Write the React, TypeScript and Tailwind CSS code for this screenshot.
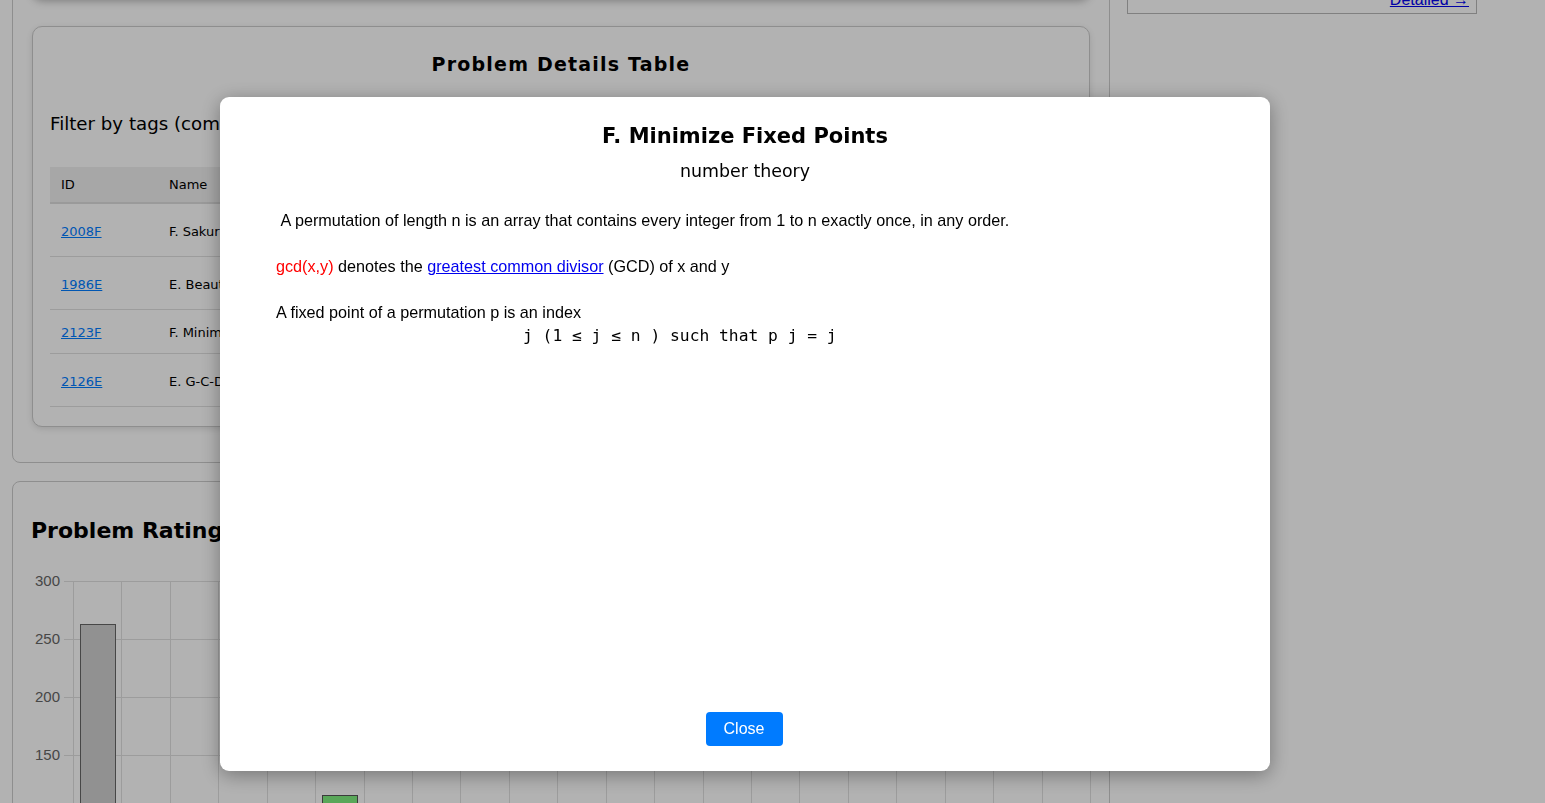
import React from "react";

const rows = [
  { id: "2008F", name: "F. Sakurako's Box", rating: "1400", tags: "combinatorics, math, number theory", h: "h-[53px]" },
  { id: "1986E", name: "E. Beautiful Array", rating: "1700", tags: "greedy, math, number theory, sortings", h: "h-[53px]" },
  { id: "2123F", name: "F. Minimize Fixed Points", rating: "1700", tags: "number theory", h: "h-[44px]" },
  { id: "2126E", name: "E. G-C-D, Unlucky!", rating: "1400", tags: "math, number theory", h: "h-[53px]" },
];

function Chart() {
  const gridX = Array.from({ length: 22 }, (_, k) => Math.round(60 + 48.43 * k) + 0.5);
  const gridY = [
    { v: 300, y: 36.5 },
    { v: 250, y: 94.5 },
    { v: 200, y: 152.5 },
    { v: 150, y: 210.5 },
    { v: 100, y: 268.5 },
  ];
  return (
    <svg width="1096" height="300" className="block" style={{ fontFamily: "'Liberation Sans', Arial, sans-serif" }}>
      {gridY.map((g) => (
        <g key={g.v}>
          <line x1={51} x2={1077} y1={g.y} y2={g.y} stroke="#e0e0e0" strokeWidth={1} />
          <text x={47} y={g.y + 4.5} textAnchor="end" fontSize={15} fill="#666">
            {g.v}
          </text>
        </g>
      ))}
      {gridX.map((x, i) => (
        <line key={i} x1={x} x2={x} y1={36} y2={300} stroke="#e0e0e0" strokeWidth={1} />
      ))}
      <rect x={67.5} y={79.5} width={35} height={240} fill="#d0d0d0" stroke="#666" strokeWidth={1} />
      <rect x={309.5} y={250.5} width={35} height={80} fill="#80f080" stroke="#555" strokeWidth={1} />
    </svg>
  );
}

export default function App() {
  return (
    <div className="relative h-[803px] overflow-hidden bg-white text-black font-['DejaVu_Sans',Verdana,sans-serif]">
      <div className="flex items-start pl-3 gap-[17px] -mt-[200px]">
        {/* left column */}
        <div className="w-[1098px] flex flex-col gap-[18px]">
          <section className="border border-[#cccccc] rounded-[8px] px-[19px] pt-[20px] pb-[35px]">
            <div className="h-[178px] mb-[27px] rounded-[10px] bg-white shadow-[0_2px_8px_rgba(0,0,0,0.3)]" />
            <div className="rounded-[10px] border border-[#cccccc] bg-white shadow-[0_2px_6px_rgba(0,0,0,0.12)] px-[17px] pt-[23px] pb-[19px]">
              <h2 className="text-center text-[19px] leading-[28px] font-bold tracking-[1.2px]">Problem Details Table</h2>
              <div className="mt-[34px] h-[24px] flex items-center gap-3">
                <label className="text-[18.2px] leading-[24px]">Filter by tags (comma separated):</label>
                <input className="w-[300px] h-[24px] border border-[#ccc] rounded px-2 text-[14px]" placeholder="e.g. math, greedy" />
              </div>
              <div className="mt-[31px] text-[13px]">
                <div className="flex items-center pt-[1px] h-[37px] bg-[#f0f0f0] border-b-2 border-[#dddddd]">
                  <div className="w-[108px] pl-[11px]">ID</div>
                  <div className="w-[400px] pl-[11px]">Name</div>
                  <div className="w-[120px] pl-[11px]">Rating</div>
                  <div className="flex-1 pl-[11px]">Tags</div>
                </div>
                {rows.map((r) => (
                  <div key={r.id} className={`flex items-center pt-[3px] ${r.h} border-b border-[#e0e0e0]`}>
                    <div className="w-[108px] pl-[11px]">
                      <a href="#" className="text-[#007bff] underline">{r.id}</a>
                    </div>
                    <div className="w-[400px] pl-[11px]">{r.name}</div>
                    <div className="w-[120px] pl-[11px]">{r.rating}</div>
                    <div className="flex-1 pl-[11px]">{r.tags}</div>
                  </div>
                ))}
              </div>
            </div>
          </section>
          <section className="border border-[#cccccc] rounded-[8px] pt-[34px] h-[400px]">
            <h3 className="pl-[18px] text-[22px] leading-[30px] font-bold">Problem Ratings</h3>
            <div className="-mt-[1px]">
              <Chart />
            </div>
          </section>
        </div>
        {/* right column */}
        <aside className="w-[350px]">
          <div className="h-[214px] border border-[#b8b8b8] flex flex-col justify-between px-[7px] pt-3 pb-[1px]">
            <div className="text-[14px] text-[#333]">Summary</div>
            <div className="text-right">
              <a href="#" className="text-[#0000ee] underline text-[16px] leading-[20px] font-['Liberation_Sans',Arial,sans-serif]">Detailed →</a>
            </div>
          </div>
        </aside>
      </div>

      {/* overlay */}
      <div className="fixed inset-0 bg-black/30">
        <div className="absolute left-[220px] top-[97px] w-[1050px] h-[674px] bg-white rounded-[9px] shadow-[0_4px_20px_rgba(0,0,0,0.35)] flex flex-col px-[56px] pt-[25px] pb-[25px]">
          <h2 className="text-center text-[21px] leading-[28px] font-bold">F. Minimize Fixed Points</h2>
          <div className="mt-[9px] text-center text-[17.4px] leading-[24px]">number theory</div>
          <div className="flex-1 mt-[25px] font-['Liberation_Sans',Arial,sans-serif] text-[16.2px] leading-[24px]">
            <p className="mb-[22px]">{"\u00a0"}A permutation of length n is an array that contains every integer from 1 to n exactly once, in any order.</p>
            <p className="mb-[22px]">
              <span className="text-[#ff0000]">gcd(x,y)</span> denotes the{" "}
              <a href="#" className="text-[#0000ee] underline">greatest common divisor</a> (GCD) of x and y
            </p>
            <p>A fixed point of a permutation p is an index</p>
            <div className="pl-[247px] whitespace-pre font-['DejaVu_Sans_Mono',monospace] text-[16.3px] leading-[24px]">j (1 ≤ j ≤ n ) such that p j = j</div>
          </div>
          <div className="flex justify-center pr-[2px]">
            <button className="w-[77px] h-[34px] rounded-[4px] bg-[#007bff] text-white text-[16px] font-['Liberation_Sans',Arial,sans-serif]">Close</button>
          </div>
        </div>
      </div>
    </div>
  );
}
